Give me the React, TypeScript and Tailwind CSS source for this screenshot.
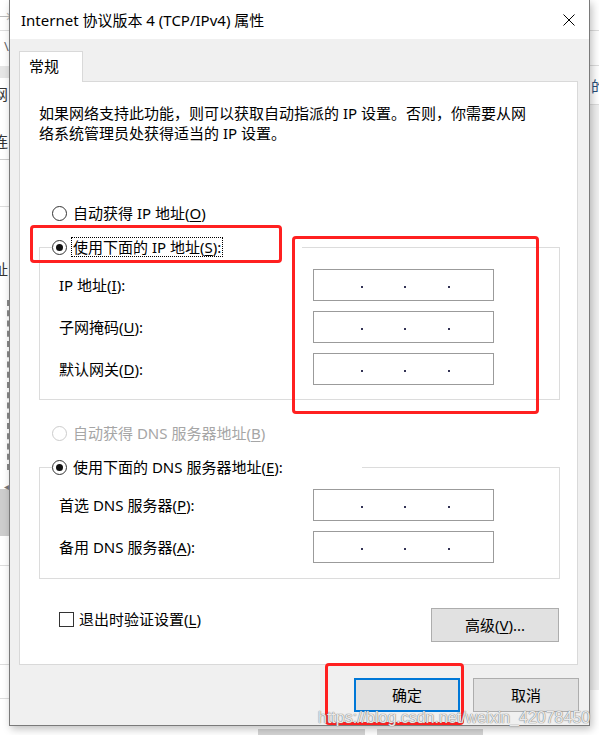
import React from "react";

function Radio({ checked, disabled }: { checked?: boolean; disabled?: boolean }) {
  return (
    <span
      className={
        disabled
          ? "w-[15px] h-[15px] rounded-full border border-[#cccccc] bg-white flex items-center justify-center shrink-0"
          : "w-[15px] h-[15px] rounded-full border border-[#333333] bg-white flex items-center justify-center shrink-0"
      }
    >
      {checked ? <span className="w-[7px] h-[7px] rounded-full bg-[#111111]" /> : null}
    </span>
  );
}

function IpBox() {
  return (
    <div className="w-[181px] h-[32px] border border-[#9b9b9b] bg-white flex items-center pl-[47px] pt-[4px]">
      <span className="w-[2px] h-[2px] bg-[#333355]" />
      <span className="w-[2px] h-[2px] bg-[#333355] ml-[41px]" />
      <span className="w-[2px] h-[2px] bg-[#333355] ml-[42px]" />
    </div>
  );
}

function Row({ label }: { label: React.ReactNode }) {
  return (
    <div className="flex items-center h-[32px]">
      <div className="w-[273px] pl-[19px] leading-[20px]">{label}</div>
      <IpBox />
    </div>
  );
}

const U = ({ c }: { c: string }) => <span className="underline underline-offset-[2px]">{c}</span>;

export default function App() {
  return (
    <div className="relative w-[599px] h-[735px] overflow-hidden bg-white font-['Noto_Sans','Noto_Sans_CJK_SC',sans-serif] text-[15px] text-black">
      {/* background desktop / app */}
      <div className="flex w-[599px] h-[735px]">
        <div className="w-[9px] flex flex-col text-[15px] leading-[20px] overflow-hidden">
          <div className="h-[31px] border-b border-[#dddddd] pt-[6px] text-[#bbbbbb] -ml-[3px]">→</div>
          <div className="h-[35px] pt-[5px] text-[#666666] pl-[4px] text-[13px]">\</div>
          <div className="h-[12px] bg-[#e6e6e6]" />
          <div className="h-[81px] pt-[6px] -ml-[7px]">
            <div className="text-[#333333]">网</div>
            <div className="mt-[27px] text-[#333333]">连</div>
          </div>
          <div className="h-[47px] border-t border-[#cccccc]" />
          <div className="h-[94px] border-t border-[#dddddd] pt-[52px] -ml-[7px] text-[#333333]">址</div>
          <div className="h-[170px] border-r-2 border-dashed border-[#888888]" />
          <div className="h-[20px] border-b border-[#cccccc] text-[#777777] text-[10px] pl-[4px] pt-[6px]">◂</div>
          <div className="h-[46px] bg-[#cdcdcd]" />
          <div className="h-[30px] border-b border-[#dddddd]" />
          <div className="h-[99px] border-b border-[#dddddd]" />
          <div className="h-[34px] border-b border-[#dddddd]" />
        </div>
        <div className="flex-1 flex flex-col justify-end">
          <div className="h-[9px] flex pl-[249px] pt-[3px] gap-[12px]">
            <div className="w-[107px] h-[6px] bg-[#d4d4d4]" />
            <div className="w-[106px] h-[6px] bg-[#d4d4d4]" />
          </div>
        </div>
        <div className="w-[10px] flex flex-col overflow-hidden text-[15px] leading-[20px]">
          <div className="h-[31px] border-b border-[#dddddd]" />
          <div className="h-[35px] border-b border-[#dddddd]" />
          <div className="h-[39px] border-b border-[#dddddd] pt-[10px] pl-[2px] text-[#2a4f7a]">的</div>
          <div className="h-[585px] bg-[#f0f0f0]" />
          <div className="flex-1 bg-white" />
        </div>
      </div>

      {/* dialog window */}
      <div className="absolute left-[9px] top-0 w-[581px] h-[726px] border border-t-0 border-[#7a7a7a] bg-[#f0f0f0] flex flex-col shadow-[2px_3px_8px_rgba(0,0,0,0.25)]">
        <div className="h-[39px] bg-white flex items-center justify-between pl-[11px] pr-[14px] shrink-0">
          <div className="leading-[20px] text-[15px]">Internet 协议版本 4 (TCP/IPv4) 属性</div>
          <svg width="12" height="12" viewBox="0 0 12 12">
            <path d="M0.5 0.5 L11.5 11.5 M11.5 0.5 L0.5 11.5" stroke="#000" strokeWidth="1" />
          </svg>
        </div>

        <div className="flex flex-col pl-[9px]">
          <div className="mt-[12px] relative z-10 w-[64px] h-[31px] -mb-[1px] border border-b-0 border-[#d9d9d9] bg-white pl-[9px] pt-[4px] leading-[20px]">
            常规
          </div>
          <div className="w-[559px] h-[584px] border border-[#d9d9d9] bg-white flex flex-col pl-[19px]">
            <div className="pt-[21px] leading-[20px]">
              <div>如果网络支持此功能，则可以获取自动指派的 IP 设置。否则，你需要从网</div>
              <div>络系统管理员处获得适当的 IP 设置。</div>
            </div>

            <div className="mt-[60px] ml-[13px] h-[20px] flex items-center leading-[20px]">
              <Radio />
              <span className="ml-[6px]">
                自动获得 IP 地址(<U c="O" />)
              </span>
            </div>

            <fieldset className="mt-[14px] w-[521px] border border-[#dcdcdc] pb-[14px]">
              <legend className="ml-[12px] w-[250px] h-[20px] flex items-center leading-[18px]">
                <Radio checked />
                <span className="ml-[4px] h-[20px] border border-dotted border-[#000000] px-[1px]">
                  使用下面的 IP 地址(<U c="S" />):
                </span>
              </legend>
              <div className="pt-[12px] flex flex-col gap-[10px]">
                <Row label={<>IP 地址(<U c="I" />):</>} />
                <Row label={<>子网掩码(<U c="U" />):</>} />
                <Row label={<>默认网关(<U c="D" />):</>} />
              </div>
            </fieldset>

            <div className="mt-[23px] ml-[13px] h-[20px] flex items-center leading-[20px] text-[#a6a6a6]">
              <Radio disabled />
              <span className="ml-[6px]">
                自动获得 DNS 服务器地址(<U c="B" />)
              </span>
            </div>

            <fieldset className="mt-[14px] w-[521px] border border-[#dcdcdc] pb-[15px]">
              <legend className="ml-[12px] w-[310px] h-[20px] flex items-center leading-[20px]">
                <Radio checked />
                <span className="ml-[6px]">
                  使用下面的 DNS 服务器地址(<U c="E" />):
                </span>
              </legend>
              <div className="pt-[12px] flex flex-col gap-[10px]">
                <Row label={<>首选 DNS 服务器(<U c="P" />):</>} />
                <Row label={<>备用 DNS 服务器(<U c="A" />):</>} />
              </div>
            </fieldset>

            <div className="mt-[29px] w-[521px] flex items-start justify-between">
              <div className="ml-[20px] mt-[1px] h-[20px] flex items-center leading-[20px]">
                <span className="w-[15px] h-[15px] border border-[#333333] bg-white shrink-0" />
                <span className="ml-[5px]">
                  退出时验证设置(<U c="L" />)
                </span>
              </div>
              <div className="mr-[1px] w-[128px] h-[34px] bg-[#e1e1e1] border border-[#adadad] flex items-center justify-center leading-[20px]">
                <span>
                  高级(<U c="V" />)...
                </span>
              </div>
            </div>
          </div>
        </div>

        <div className="mt-[13px] flex justify-end gap-[13px] pr-[10px]">
          <div className="w-[106px] h-[34px] bg-[#e1e1e1] border-2 border-[#0078d7] flex items-center justify-center leading-[20px]">
            确定
          </div>
          <div className="w-[106px] h-[34px] bg-[#e1e1e1] border border-[#adadad] flex items-center justify-center leading-[20px]">
            取消
          </div>
        </div>
      </div>

      {/* annotation red rectangles */}
      <div className="absolute left-[30px] top-[225px] w-[252px] h-[38px] border-[3px] border-[#ff2020] rounded-[4px]" />
      <div className="absolute left-[292px] top-[236px] w-[247px] h-[178px] border-[3px] border-[#ff2020] rounded-[4px]" />
      <div className="absolute left-[325px] top-[663px] w-[139px] h-[62px] border-[3px] border-[#ff2020] rounded-[4px]" />

      {/* watermark */}
      <div className="absolute left-[318px] top-[706px] text-[16px] leading-[24px] font-['Liberation_Sans',sans-serif] text-[rgba(255,255,255,0.85)] [text-shadow:0_0_1px_#777,0_0_1px_#777]">
        https://blog.csdn.net/weixin_42078450
      </div>
    </div>
  );
}
